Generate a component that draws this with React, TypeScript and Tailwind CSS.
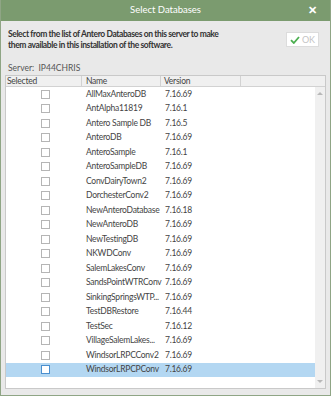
import React from 'react'

const DATABASES: [string, string][] = [
  ['AllMaxAnteroDB', '7.16.69'],
  ['AntAlpha11819', '7.16.1'],
  ['Antero Sample DB', '7.16.5'],
  ['AnteroDB', '7.16.69'],
  ['AnteroSample', '7.16.1'],
  ['AnteroSampleDB', '7.16.69'],
  ['ConvDairyTown2', '7.16.69'],
  ['DorchesterConv2', '7.16.69'],
  ['NewAnteroDatabase', '7.16.18'],
  ['NewAnteroDB', '7.16.69'],
  ['NewTestingDB', '7.16.69'],
  ['NKWDConv', '7.16.69'],
  ['SalemLakesConv', '7.16.69'],
  ['SandsPointWTRConv', '7.16.69'],
  ['SinkingSpringsWTP...', '7.16.69'],
  ['TestDBRestore', '7.16.44'],
  ['TestSec', '7.16.12'],
  ['VillageSalemLakes...', '7.16.69'],
  ['WindsorLRPCConv2', '7.16.69'],
  ['WindsorLRPCPConv', '7.16.69'],
]

export default function App() {
  return (
    <div className="w-[331px] h-[396px] flex flex-col bg-[#e9e9e9] border-x border-b border-[#8fa585] font-['Lato','Liberation_Sans',sans-serif] text-[#3a3a3a] overflow-hidden">
      {/* Title bar */}
      <div className="h-[21px] shrink-0 bg-[#7b9b6f] relative flex items-center justify-center text-white text-[9.5px]">
        Select Databases
        <span className="absolute right-[13px] top-[4px] text-[11px] font-bold leading-none">✕</span>
      </div>

      {/* Instructions + OK */}
      <div className="flex pl-[7px] pr-[11px] pt-[8px]">
        <p className="flex-1 text-[8.5px] font-bold leading-[10.5px] tracking-[-0.4px] text-[#333]">
          Select from the list of Antero Databases on this server to make
          <br />
          them available in this installation of the software.
        </p>
        <button className="mt-[3px] w-[33px] h-[15px] bg-white border border-[#dcdcdc] flex items-center justify-center gap-[2px] text-[9px] text-[#c4c4c4]">
          <svg width="10" height="8" viewBox="0 0 10 8">
            <path d="M1 4.2 L3.8 7 L9 1" fill="none" stroke="#4caf50" strokeWidth="1.8" />
          </svg>
          OK
        </button>
      </div>

      <div className="pl-[7px] pt-[12px] h-[25px] text-[8.5px] text-[#555]">Server:&nbsp; IP44CHRIS</div>

      {/* Grid */}
      <div className="mx-[4px] mb-[6px] flex-1 flex flex-col border border-[#c9c9c9] bg-white text-[8.5px] tracking-[-0.25px]">
        <div className="h-[11px] shrink-0 flex bg-[#f0f0f0] border-b border-[#d2d2d2] leading-[11px] text-[#444]">
          <div className="w-[76px] pl-[1px] border-r border-[#d2d2d2]">Selected</div>
          <div className="w-[79px] pl-[4px] border-r border-[#d2d2d2]">Name</div>
          <div className="w-[80px] pl-[3px] border-r border-[#d2d2d2]">Version</div>
          <div className="flex-1" />
        </div>
        <div className="flex-1 flex">
          <div className="flex-1">
            {DATABASES.map(([name, version], i) => {
              const selected = i === DATABASES.length - 1
              return (
                <div
                  key={name}
                  className={`h-[14.5px] flex items-center ${selected ? 'bg-[#b3d7f2]' : ''}`}
                >
                  <div className="w-[77px] flex justify-center pl-[1px]">
                    <div
                      className={`w-[9px] h-[9px] border bg-white ${
                        selected ? 'border-[#4a8fcf]' : 'border-[#b5b5b5]'
                      }`}
                    />
                  </div>
                  <div className="w-[79px] pl-[3px] whitespace-nowrap text-[#444]">{name}</div>
                  <div className="pl-[3px] text-[#444]">{version}</div>
                </div>
              )
            })}
          </div>
          <div className="w-[10px] bg-[#f0f0f0] flex flex-col justify-between items-center py-[4px]">
            <svg width="6" height="4" viewBox="0 0 6 4">
              <path d="M0 4 L3 1 L6 4 Z" fill="#b8b8b8" />
            </svg>
            <svg width="6" height="4" viewBox="0 0 6 4">
              <path d="M0 0 L3 3 L6 0 Z" fill="#b8b8b8" />
            </svg>
          </div>
        </div>
      </div>
    </div>
  )
}
